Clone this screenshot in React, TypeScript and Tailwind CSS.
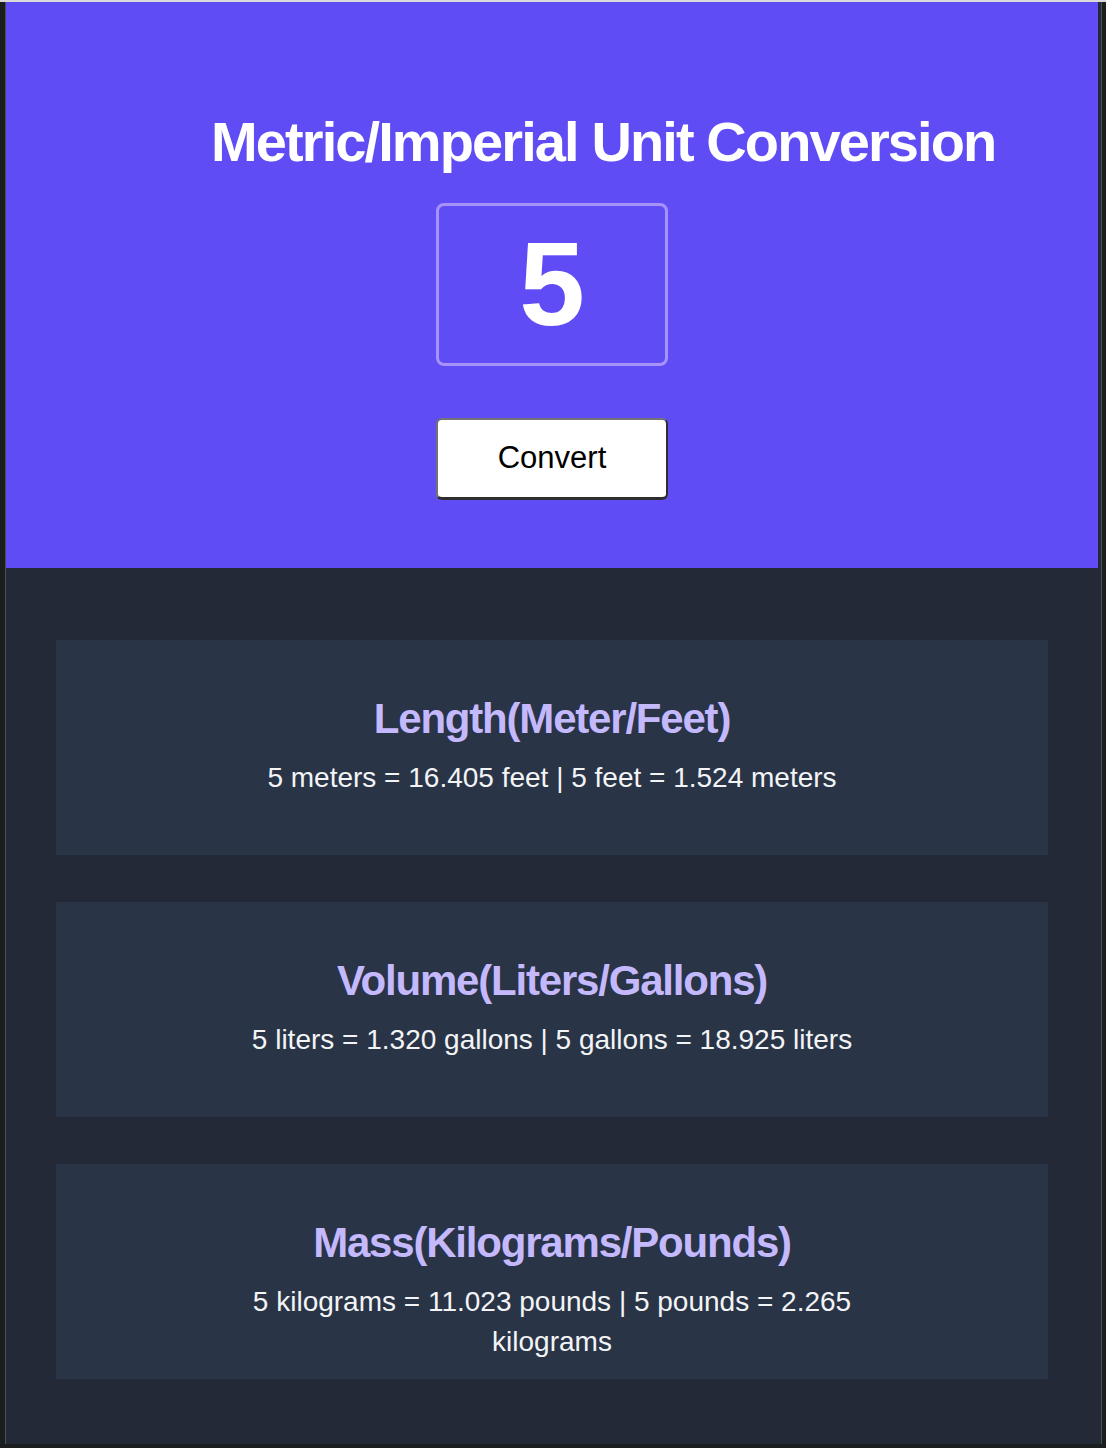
import { useState } from "react";

const font = { fontFamily: '"Liberation Sans", Arial, Helvetica, sans-serif' };

interface ResultCardProps {
  title: string;
  text: string;
}

function ResultCard({ title, text }: ResultCardProps) {
  return (
    <div className="h-[215px] bg-[#293447] pt-[54px] text-center flex flex-col items-center">
      <h2 className="text-[42px] leading-[50px] font-bold tracking-[-1.2px] text-[#c5b9fd]">
        {title}
      </h2>
      <p className="mt-[14px] max-w-[640px] text-[28px] leading-[40px] text-[#f3f4f6]">
        {text}
      </p>
    </div>
  );
}

export default function App() {
  const [value, setValue] = useState("5");
  const [num, setNum] = useState(5);

  const n = num;
  const length = `${n} meters = ${(n * 3.281).toFixed(3)} feet | ${n} feet = ${(n / 3.281).toFixed(3)} meters`;
  const volume = `${n} liters = ${(n * 0.264).toFixed(3)} gallons | ${n} gallons = ${(n * 3.785).toFixed(3)} liters`;
  const mass = `${n} kilograms = ${(n * 2.2046).toFixed(3)} pounds | ${n} pounds = ${(n * 0.453).toFixed(3)} kilograms`;

  return (
    <div className="w-full h-[1448px] bg-[#1b1e1e] flex flex-col" style={font}>
      <div className="h-[2px] bg-[#dadada]" />
      <div className="flex-1 flex pl-[5px] pr-[4px] pb-[4px]">
        <div className="flex-1 flex flex-col bg-[#232937] border-l border-r border-[#4b4f52]">
          <header className="mr-[3px] h-[566px] bg-[#604cf5] flex flex-col items-center pt-[106px]">
            <h1 className="self-start ml-[205px] text-[56px] leading-[67px] font-bold tracking-[-1.9px] text-white">
              Metric/Imperial Unit Conversion
            </h1>
            <input
              value={value}
              onChange={(e) => setValue(e.target.value)}
              className="mt-[28px] w-[232px] h-[163px] rounded-[8px] border-[3px] border-[#a593fa] bg-transparent text-center text-[118px] font-bold text-white outline-none"
              style={font}
            />
            <button
              onClick={() => setNum(Number(value) || 0)}
              className="mt-[52px] w-[232px] h-[82px] rounded-[6px] bg-white border-2 border-t-[#737373] border-l-[#737373] border-r-[#2e2e2e] border-b-[3px] border-b-[#2e2e2e] text-[31px] text-black"
              style={font}
            >
              Convert
            </button>
          </header>
          <main className="flex flex-col gap-[47px] pt-[72px] pl-[50px] pr-[53px]">
            <ResultCard title="Length(Meter/Feet)" text={length} />
            <ResultCard title="Volume(Liters/Gallons)" text={volume} />
            <ResultCard title="Mass(Kilograms/Pounds)" text={mass} />
          </main>
        </div>
      </div>
    </div>
  );
}
